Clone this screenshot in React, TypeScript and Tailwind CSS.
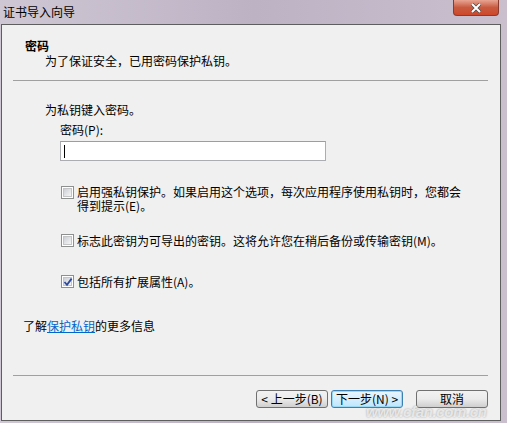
import React from 'react';

const font = { fontFamily: '"Noto Sans CJK SC", "Liberation Sans", sans-serif' };

const CheckBox = ({ checked }: { checked?: boolean }) => (
  <span className="relative shrink-0 w-[13px] h-[13px] border border-[#8e8f8f] bg-white p-[1px] flex">
    <span className="flex-1 border border-[#c3c4c5] bg-gradient-to-br from-[#cbcfd5] to-[#f6f6f6]" />
    {checked && (
      <svg className="absolute left-[1px] top-[1px]" width="10" height="10" viewBox="0 0 10 10">
        <path d="M1.5 5 L4 7.8 L8.6 1.6" fill="none" stroke="#2c4aa0" strokeWidth="1.8" />
      </svg>
    )}
  </span>
);

const WizButton = ({ label, focused }: { label: string; focused?: boolean }) => (
  <button
    className={`w-[72px] h-[18px] rounded-[3px] border text-[12px] leading-[14px] text-black flex items-center justify-center ${
      focused
        ? 'border-[#3c7fb1] bg-gradient-to-b from-[#eaf6fd] to-[#bee6fd] shadow-[inset_0_0_0_1px_#9ad9f5]'
        : 'border-[#707070] bg-gradient-to-b from-[#f2f2f2] via-[#ebebeb] to-[#cfcfcf]'
    }`}
  >
    {label}
  </button>
);

export default function App() {
  return (
    <div style={font} className="relative w-[507px] h-[423px] overflow-hidden flex flex-col bg-gradient-to-r from-[#cfc7d4] via-[#bdb2c4] to-[#c9bfcd]">
      <div className="h-[24px] flex items-start justify-between pl-[3px] pr-[8px]">
        <span className="text-[12px] leading-[14px] mt-[5px] text-black">证书导入向导</span>
        <span className="w-[46px] h-[16px] rounded-b-[4px] border border-t-0 border-[#8a3a2e] bg-gradient-to-b from-[#e8a493] via-[#c75a3f] to-[#d0462a] flex items-center justify-center">
          <svg width="12" height="10" viewBox="0 0 12 10">
            <path d="M2 1 L10 9 M10 1 L2 9" stroke="#4a4a4a" strokeWidth="3.4" />
            <path d="M2 1 L10 9 M10 1 L2 9" stroke="#ffffff" strokeWidth="2" />
          </svg>
        </span>
      </div>

      <div className="ml-[1px] mr-[6px] h-[397px] border border-[#5e5e5e] bg-[#f0f0f0] flex flex-col text-[12px] text-black">
        <div className="pt-[14px] pl-[23px] font-bold leading-[14px]">密码</div>
        <div className="mt-[1px] pl-[43px] leading-[14px]">为了保证安全，已用密码保护私钥。</div>
        <div className="mt-[12px] ml-[11px] mr-[12px] h-px bg-[#a0a0a0]" />

        <div className="mt-[22px] pl-[43px] leading-[14px]">为私钥键入密码。</div>
        <div className="mt-[6px] pl-[58px] leading-[14px]">密码(P):</div>
        <div className="mt-[4px] ml-[58px] w-[266px] h-[20px] border border-[#abadb3] border-t-[#8e9fb6] bg-white flex items-center pl-[3px]">
          <span className="w-px h-[13px] bg-black" />
        </div>

        <div className="mt-[25px] ml-[59px] flex items-start gap-[3px]">
          <CheckBox />
          <span className="leading-[14px] -mt-px">
            启用强私钥保护。如果启用这个选项，每次应用程序使用私钥时，您都会
            <br />
            得到提示(E)。
          </span>
        </div>
        <div className="mt-[21px] ml-[59px] flex items-start gap-[3px]">
          <CheckBox />
          <span className="leading-[13px]">标志此密钥为可导出的密钥。这将允许您在稍后备份或传输密钥(M)。</span>
        </div>
        <div className="mt-[28px] ml-[59px] flex items-start gap-[3px]">
          <CheckBox checked />
          <span className="leading-[13px]">包括所有扩展属性(A)。</span>
        </div>

        <div className="mt-[31px] pl-[21px] leading-[14px]">
          了解<span className="text-[#0066cc] underline">保护私钥</span>的更多信息
        </div>

        <div className="mt-[42px] ml-[11px] mr-[12px] h-px bg-[#a0a0a0]" />
        <div className="mt-[14px] flex justify-end pr-[12px]">
          <WizButton label="< 上一步(B)" />
          <span className="w-[3px]" />
          <WizButton label="下一步(N) >" focused />
          <span className="w-[13px]" />
          <WizButton label="取消" />
        </div>
      </div>

      <span className="absolute left-[366px] top-[401px] text-[15px] font-bold italic text-white/70 tracking-tight [text-shadow:0_0_2px_#9a9a9a]" style={{ fontFamily: '"Liberation Sans", sans-serif' }}>
        www.cfan.com.cn
      </span>
    </div>
  );
}
